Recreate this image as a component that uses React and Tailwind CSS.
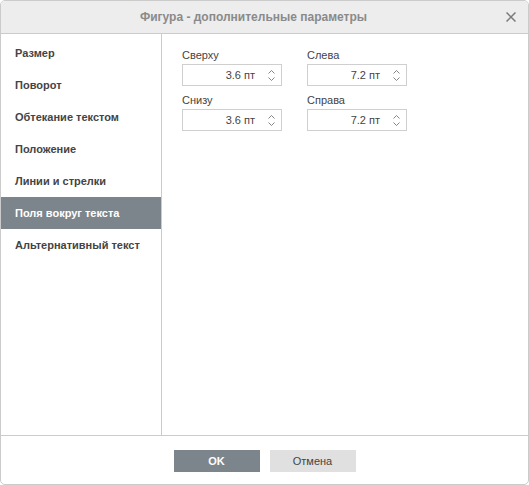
import React from "react";

const items = [
  "Размер",
  "Поворот",
  "Обтекание текстом",
  "Положение",
  "Линии и стрелки",
  "Поля вокруг текста",
  "Альтернативный текст",
];

function Spin({ value }) {
  return (
    <div className="flex h-[22px] w-[100px] items-center border border-[#cfcfcf] bg-white">
      <div className="flex-1 text-right pr-[10px] text-[11px] text-[#444]">{value}</div>
      <div className="flex w-[16px] flex-col items-center justify-center gap-[3px] pr-[4px]">
        <svg width="7" height="4" viewBox="0 0 7 4"><path d="M0.5 3.5 L3.5 0.5 L6.5 3.5" fill="none" stroke="#777" strokeWidth="0.9" /></svg>
        <svg width="7" height="4" viewBox="0 0 7 4"><path d="M0.5 0.5 L3.5 3.5 L6.5 0.5" fill="none" stroke="#777" strokeWidth="0.9" /></svg>
      </div>
    </div>
  );
}

function Field({ label, value }) {
  return (
    <div className="flex flex-col">
      <div className="h-[18px] text-[11px] leading-[18px] text-[#444]">{label}</div>
      <Spin value={value} />
    </div>
  );
}

export default function App() {
  return (
    <div className="h-[485px] w-[529px] bg-white" style={{ fontFamily: '"Liberation Sans", Arial, sans-serif' }}>
      <div className="flex h-[485px] w-[529px] flex-col overflow-hidden rounded-[5px] border border-[#cbcbcb] bg-white">
        <div className="relative flex h-[33px] items-center justify-center border-b border-[#cbcbcb] bg-[#ededed] pr-[22px]">
          <span className="text-[12px] font-bold text-[#8a8a8a]">Фигура - дополнительные параметры</span>
          <svg className="absolute right-[12px] top-[11px]" width="10" height="10" viewBox="0 0 10 10">
            <path d="M0.5 0.5 L9.5 9.5 M9.5 0.5 L0.5 9.5" stroke="#7a7a7a" strokeWidth="1.5" />
          </svg>
        </div>
        <div className="flex flex-1">
          <div className="w-[161px] border-r border-[#cbcbcb] pt-[3px]">
            {items.map((t, i) => (
              <div
                key={t}
                className={
                  i === 5
                    ? "flex h-[32px] items-center bg-[#7d858c] pl-[14px] text-[11px] font-bold text-white"
                    : "flex h-[32px] items-center pl-[14px] text-[11px] font-bold text-[#444]"
                }
              >
                {t}
              </div>
            ))}
          </div>
          <div className="flex-1 pl-[20px] pt-[12px]">
            <div className="grid w-[225px] grid-cols-[125px_100px] gap-y-[5px]">
              <Field label="Сверху" value="3.6 пт" />
              <Field label="Слева" value="7.2 пт" />
              <Field label="Снизу" value="3.6 пт" />
              <Field label="Справа" value="7.2 пт" />
            </div>
          </div>
        </div>
        <div className="flex h-[49px] items-start justify-center gap-[10px] border-t border-[#cbcbcb] pt-[14px]">
          <button className="h-[22px] w-[86px] bg-[#7d858c] text-[11px] font-bold text-white">OK</button>
          <button className="h-[22px] w-[86px] bg-[#e0e0e0] text-[11px] text-[#444]">Отмена</button>
        </div>
      </div>
    </div>
  );
}
